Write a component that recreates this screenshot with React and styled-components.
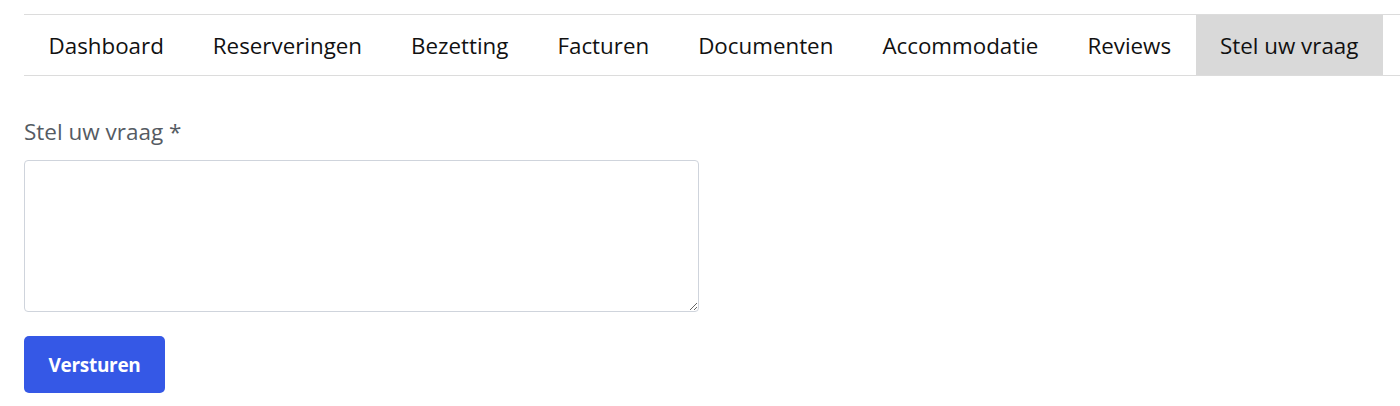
import React, { useState } from 'react';
import styled, { createGlobalStyle } from 'styled-components';

const GlobalStyle = createGlobalStyle`
  body {
    margin: 0;
    background: #fff;
    font-family: "Segoe UI", "Open Sans", "Noto Sans", sans-serif;
  }
`;

const Page = styled.div`
  padding: 14px 0 0 24px;
`;

const TabBar = styled.nav`
  display: flex;
  border-top: 1px solid #dcdcdc;
  border-bottom: 1px solid #dcdcdc;
`;

const Tab = styled.button`
  border: 0;
  margin: 0;
  padding: 0 24.5px;
  height: 60px;
  font-family: inherit;
  font-size: 22.35px;
  color: #111;
  cursor: pointer;
  background: ${(p) => (p.active ? '#d9d9d9' : 'transparent')};
`;

const Form = styled.form`
  display: flex;
  flex-direction: column;
  align-items: flex-start;
  padding-top: 42px;
`;

const Label = styled.label`
  font-size: 22.5px;
  color: #555b63;
  line-height: 28px;
  margin-bottom: 14px;
`;

const TextArea = styled.textarea`
  box-sizing: border-box;
  width: 675px;
  height: 152px;
  border: 1px solid #cfd4dc;
  border-radius: 4px;
  font-family: inherit;
  font-size: 16px;
  padding: 8px 12px;
  margin: 0;
  outline: none;
`;

const SubmitButton = styled.button`
  margin-top: 24px;
  width: 141px;
  height: 57px;
  border: 0;
  border-radius: 5px;
  background: #3558e6;
  color: #fff;
  font-family: inherit;
  font-size: 19px;
  font-weight: 700;
  letter-spacing: -0.3px;
  cursor: pointer;
`;

const tabs = [
  'Dashboard',
  'Reserveringen',
  'Bezetting',
  'Facturen',
  'Documenten',
  'Accommodatie',
  'Reviews',
  'Stel uw vraag'
];

const App = () => {
  const [active, setActive] = useState('Stel uw vraag');
  return (
    <>
      <GlobalStyle />
      <Page>
        <TabBar>
          {tabs.map((t) => (
            <Tab key={t} active={t === active} onClick={() => setActive(t)}>
              {t}
            </Tab>
          ))}
        </TabBar>
        <Form onSubmit={(e) => e.preventDefault()}>
          <Label htmlFor='vraag'>Stel uw vraag *</Label>
          <TextArea id='vraag' />
          <SubmitButton type='submit'>Versturen</SubmitButton>
        </Form>
      </Page>
    </>
  );
};

export default App;
